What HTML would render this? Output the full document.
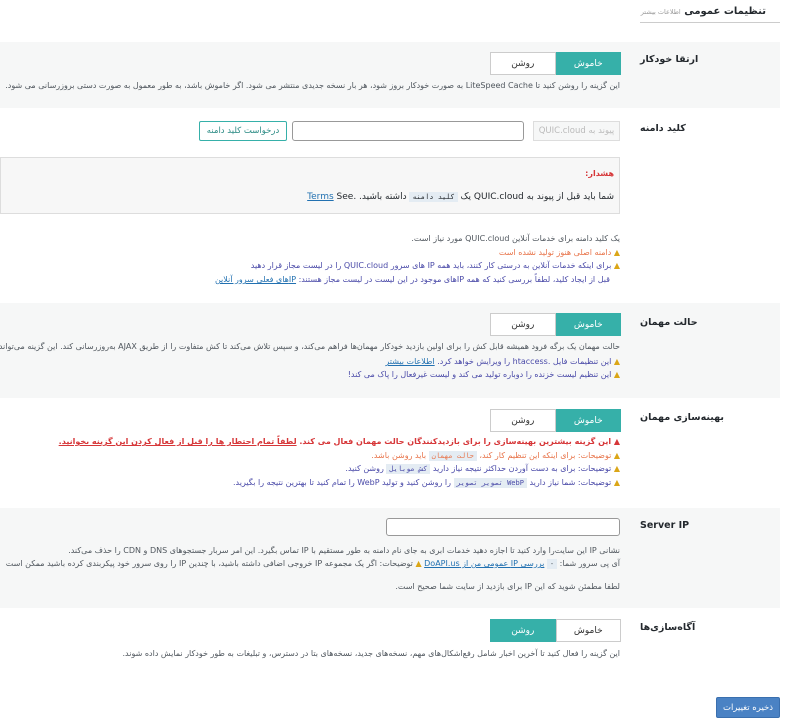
<!DOCTYPE html>
<html><head><meta charset="utf-8"><style>
*{box-sizing:border-box;margin:0;padding:0}
html,body{overflow:hidden}
body{width:790px;height:723px;overflow:hidden;background:#fff;position:relative;font-family:"DejaVu Sans","Liberation Sans",sans-serif;font-size:8px;color:#50575e}
.a{position:absolute;white-space:nowrap;direction:rtl}
.r{right:170px;text-align:right}
.row{position:absolute;left:0;width:780px;background:#f6f7f7}
.lbl{position:absolute;left:640px;font-weight:bold;font-size:9.5px;color:#23282d;direction:rtl;white-space:nowrap}
.tg{position:absolute;width:131px;height:23px;display:flex;direction:rtl;left:490px}
.tg span{flex:1;display:flex;align-items:center;justify-content:center;font-size:9px;border:1px solid #ccc;background:#fff;color:#333}
.tg span.on{background:#36b0a9;border-color:#36b0a9;color:#fff}
.w{color:#dba617}
.code{background:#e4ecf3;padding:1px 3px;font-family:"DejaVu Sans Mono",monospace;font-size:7px}
a{color:#2271b1}
.ind{color:#4a4aa8}
.clip{position:absolute;left:0;top:0;width:790px;height:723px;overflow:hidden}
</style></head><body><div class="clip">
<div class="a" style="right:24px;top:6px;font-size:10px;font-weight:bold;color:#23282d">تنظیمات عمومی <span style="font-size:6.5px;font-weight:normal;color:#999">اطلاعات بیشتر</span></div>
<div style="position:absolute;left:640px;top:22px;width:140px;height:1px;background:#ccc"></div>

<div class="row" style="top:42px;height:66px"></div>
<div class="lbl" style="top:54px">ارتقا خودکار</div>
<div class="tg" style="top:52px"><span class="on">خاموش</span><span>روشن</span></div>
<div class="a r" style="top:81px">این گزینه را روشن کنید تا LiteSpeed Cache به صورت خودکار بروز شود، هر بار نسخه جدیدی منتشر می شود. اگر خاموش باشد، به طور معمول به صورت دستی بروزرسانی می شود.</div>

<div class="lbl" style="top:123px">کلید دامنه</div>
<div style="position:absolute;left:533px;top:121px;width:87px;height:20px;border:1px solid #ddd;background:#f6f7f7;color:#bbb;font-size:8.5px;display:flex;align-items:center;justify-content:center;direction:rtl">پیوند به QUIC.cloud</div>
<div style="position:absolute;left:292px;top:121px;width:232px;height:20px;border:1px solid #999;border-radius:3px;background:#fff"></div>
<div style="position:absolute;left:199px;top:121px;width:88px;height:20px;border:1px solid #36b0a9;border-radius:2px;color:#2a8a84;font-size:8.5px;display:flex;align-items:center;justify-content:center;direction:rtl">درخواست کلید دامنه</div>
<div style="position:absolute;left:0;top:157px;width:620px;height:57px;border:1px solid #ddd;background:#f7f7f7"></div>
<div class="a" style="right:176px;top:169px;color:#d63638;font-weight:bold">هشدار:</div>
<div class="a" style="right:176px;top:192px;font-size:9px;color:#23282d">شما باید قبل از پیوند به QUIC.cloud یک <span class="code">کلید دامنه</span> داشته باشید. <span dir="ltr"><a href="#">Terms</a> See.</span></div>
<div class="a r" style="top:234px">یک کلید دامنه برای خدمات آنلاین QUIC.cloud مورد نیاز است.</div>
<div class="a r" style="top:248px;color:#e8744a"><span class="w">▲</span> دامنه اصلی هنوز تولید نشده است</div>
<div class="a r" style="top:261px"><span class="w">▲</span> <span class="ind">برای اینکه خدمات آنلاین به درستی کار کنند، باید همه IP های سرور QUIC.cloud را در لیست مجاز قرار دهید</span></div>
<div class="a r" style="top:275px;right:180px"><span class="ind">قبل از ایجاد کلید، لطفاً بررسی کنید که همه IPهای موجود در این لیست در لیست مجاز هستند: <a href="#">IPهای فعلی سرور آنلاین</a></span></div>

<div class="row" style="top:303px;height:95px"></div>
<div class="lbl" style="top:317px">حالت مهمان</div>
<div class="tg" style="top:313px"><span class="on">خاموش</span><span>روشن</span></div>
<div class="a r" style="top:342px">حالت مهمان یک برگه فرود همیشه قابل کش را برای اولین بازدید خودکار مهمان‌ها فراهم می‌کند، و سپس تلاش می‌کند تا کش متفاوت را از طریق AJAX به‌روزرسانی کند. این گزینه می‌تواند به بهبود سرعت</div>
<div class="a r" style="top:357px"><span class="w">▲</span> <span class="ind">این تنظیمات فایل .htaccess را ویرایش خواهد کرد. <a href="#">اطلاعات بیشتر</a></span></div>
<div class="a r" style="top:370px"><span class="w">▲</span> <span class="ind">این تنظیم لیست خزنده را دوباره تولید می کند و لیست غیرفعال را پاک می کند!</span></div>

<div class="lbl" style="top:412px">بهینه‌سازی مهمان</div>
<div class="tg" style="top:409px"><span class="on">خاموش</span><span>روشن</span></div>
<div class="a r" style="top:437px;color:#d63638;font-weight:bold">▲ این گزینه بیشترین بهینه‌سازی را برای بازدیدکنندگان حالت مهمان فعال می کند. <u>لطفاً تمام احتطار ها را قبل از فعال کردن این گزینه بخوانید.</u></div>
<div class="a r" style="top:451px;color:#e8744a"><span class="w">▲</span> توضیحات: برای اینکه این تنظیم کار کند، <span class="code">حالت مهمان</span> باید روشن باشد.</div>
<div class="a r" style="top:464px"><span class="w">▲</span> <span class="ind">توضیحات: برای به دست آوردن حداکثر نتیجه نیاز دارید <span class="code">کش موبایل</span> روشن کنید.</span></div>
<div class="a r" style="top:478px"><span class="w">▲</span> <span class="ind">توضیحات: شما نیاز دارید <span class="code">WebP تصویر تصویر</span> را روشن کنید و تولید WebP را تمام کنید تا بهترین نتیجه را بگیرید.</span></div>

<div class="row" style="top:508px;height:100px"></div>
<div class="lbl" style="top:520px">Server IP</div>
<div style="position:absolute;left:386px;top:518px;width:234px;height:18px;border:1px solid #999;border-radius:3px;background:#fff"></div>
<div class="a r" style="top:546px">نشانی IP این سایت‌را وارد کنید تا اجازه دهید خدمات ابری به جای نام دامنه به طور مستقیم با IP تماس بگیرد. این امر سربار جستجوهای DNS و CDN را حذف می‌کند.</div>
<div class="a r" style="top:559px">آی پی سرور شما: <span class="code">-</span> <a href="#">بررسی IP عمومی من از DoAPI.us</a> <span class="w">▲</span> توضیحات: اگر یک مجموعه IP خروجی اضافی داشته باشید، با چندین IP را روی سرور خود پیکربندی کرده باشید ممکن است</div>
<div class="a r" style="top:582px">لطفا مطمئن شوید که این IP برای بازدید از سایت شما صحیح است.</div>

<div class="lbl" style="top:622px">آگاه‌سازی‌ها</div>
<div class="tg" style="top:619px"><span>خاموش</span><span class="on">روشن</span></div>
<div class="a r" style="top:649px">این گزینه را فعال کنید تا آخرین اخبار شامل رفع‌اشکال‌های مهم، نسخه‌های جدید، نسخه‌های بتا در دسترس، و تبلیغات به طور خودکار نمایش داده شوند.</div>

<div style="position:absolute;left:716px;top:697px;width:64px;height:21px;background:#4a82c4;border:1px solid #3a6fae;border-radius:2px;color:#fff;font-size:8.5px;display:flex;align-items:center;justify-content:center;direction:rtl">ذخیره تغییرات</div>
</div></body></html>
